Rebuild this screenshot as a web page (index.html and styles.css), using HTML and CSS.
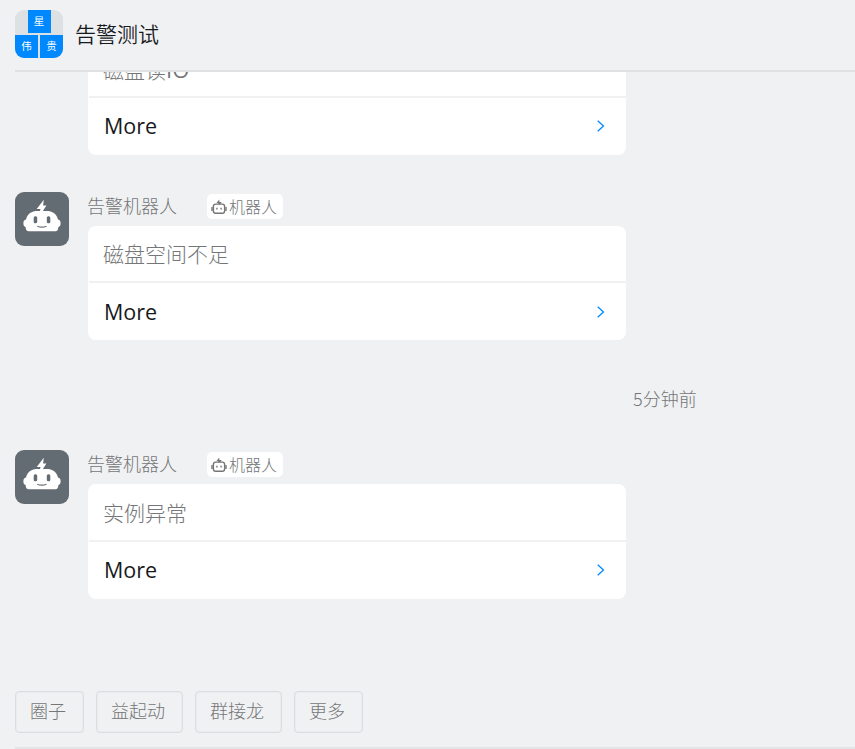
FILE: index.html
```html
<!DOCTYPE html>
<html lang="zh-CN">
<head>
<meta charset="utf-8">
<title>告警测试</title>
<link rel="stylesheet" href="styles.css">
</head>
<body>
<svg class="defs" aria-hidden="true">
  <symbol id="robot" viewBox="0 0 54 54">
    <path fill="#fff" d="M28.800 7.800 21.700 17h3.800L25 19h-2.500C16.600 19 12.400 21.600 11 27.600 9.100 27.900 8.400 29.200 8.400 31.200c0 2 .6 3.400 2.200 3.800.2 2.800 1 4.200 3.100 4.200h26.600c2.100 0 2.900-1.400 3.100-4.200 1.600-.4 2.200-1.800 2.200-3.800 0-2-.7-3.300-2.600-3.600C41.600 21.600 37.400 19 31.500 19h-3.600l3.500-5.400h-3.300z"/>
    <rect x="18.700" y="24.300" width="3.500" height="7" rx="1.500" fill="#646c73"/>
    <rect x="31.800" y="24.300" width="3.500" height="7" rx="1.500" fill="#646c73"/>
    <path d="M22.300 34.200q4.600 1.800 9.200 0" fill="none" stroke="#646c73" stroke-width="1.200"/>
  </symbol>
  <symbol id="bot" viewBox="0 0 16 16">
    <g fill="none" stroke="#737577" stroke-width="1.400">
      <rect x="2.400" y="5.100" width="11.200" height="9.200" rx="2.200"/>
      <path d="M1 8v4M15 8v4"/>
    </g>
    <path fill="#737577" d="M8.300.6 5.400 4h2v1.600h1.500l1.800-2.500H8.300zM5.200 8.800h1.400v1.700H5.200zM9.400 8.800h1.400v1.700H9.400z"/>
  </symbol>
  <symbol id="chevron" viewBox="0 0 8 12">
    <path d="M.7.700 6.500 6 .7 11.300" fill="none" stroke="#0089ff" stroke-width="1.300"/>
  </symbol>
</svg>
<header class="header">
  <div class="group-avatar">
    <span class="tile tile-top">星</span>
    <span class="tile">伟</span>
    <span class="tile">贵</span>
  </div>
  <h1 class="title">告警测试</h1>
</header>
<main class="chat">
  <article class="message message-first">
    <div class="body">
      <div class="card">
        <div class="subject">磁盘读<span class="latin">IO</span></div>
        <div class="more">More<svg class="chevron"><use href="#chevron"/></svg></div>
      </div>
    </div>
  </article>
  <article class="message">
    <div class="avatar"><svg><use href="#robot"/></svg></div>
    <div class="body">
      <div class="sender"><span class="name">告警机器人</span><span class="badge"><svg><use href="#bot"/></svg>机器人</span></div>
      <div class="card">
        <div class="subject">磁盘空间不足</div>
        <div class="more">More<svg class="chevron"><use href="#chevron"/></svg></div>
      </div>
    </div>
  </article>
  <div class="time">5分钟前</div>
  <article class="message message-last">
    <div class="avatar"><svg><use href="#robot"/></svg></div>
    <div class="body">
      <div class="sender"><span class="name">告警机器人</span><span class="badge"><svg><use href="#bot"/></svg>机器人</span></div>
      <div class="card">
        <div class="subject">实例异常</div>
        <div class="more">More<svg class="chevron"><use href="#chevron"/></svg></div>
      </div>
    </div>
  </article>
</main>
<footer class="shortcuts">
  <button>圈子</button>
  <button>益起动</button>
  <button>群接龙</button>
  <button>更多</button>
</footer>
</body>
</html>
```

FILE: styles.css
```css
* { box-sizing: border-box; }

body {
  margin: 0;
  height: 749px;
  padding-left: 15px;
  display: flex;
  flex-direction: column;
  overflow: hidden;
  background: #f0f1f3;
  color: #171a1d;
  font-family: "Noto Sans CJK SC", sans-serif;
  font-weight: 300;
}

.defs { position: absolute; width: 0; height: 0; }

svg { display: block; flex: none; }

.header {
  flex: none;
  height: 72px;
  padding: 10px 0 12px;
  display: flex;
  gap: 12px;
  border-bottom: 2px solid #e0e1e3;
}

.group-avatar {
  width: 48px;
  height: 48px;
  display: grid;
  grid-template-columns: 23px 23px;
  grid-template-rows: 23px 23px;
  gap: 2px;
  border-radius: 9px;
  overflow: hidden;
  background: #dde1e4;
}

.tile {
  display: flex;
  align-items: center;
  justify-content: center;
  background: #0089ff;
  color: #fff;
  font-size: 10.5px;
  line-height: 1;
  font-weight: 400;
}

.tile-top {
  grid-column: 1 / 3;
  justify-self: center;
  width: 23px;
}

.title {
  margin: 0;
  font-size: 21px;
  line-height: 47px;
  font-weight: 350;
}

.chat {
  flex: none;
  height: 608px;
  padding-bottom: 81px;
  display: flex;
  flex-direction: column;
  justify-content: flex-end;
  overflow: hidden;
}

.message { flex: none; display: flex; gap: 19px; }
.message-first { padding-left: 73px; margin-bottom: 37px; }

.avatar {
  width: 54px;
  height: 54px;
  border-radius: 9px;
  background: #646c73;
}
.avatar svg { width: 54px; height: 54px; }

.sender {
  height: 34px;
  display: flex;
  align-items: flex-start;
  gap: 30px;
}

.name {
  margin-left: -1px;
  font-size: 18px;
  line-height: 27px;
  color: #747677;
}

.badge {
  height: 25px;
  margin-top: 2px;
  padding: 0 6px 0 4px;
  display: flex;
  align-items: center;
  gap: 2px;
  border-radius: 5px;
  background: #fff;
  color: #747677;
  font-size: 16px;
  line-height: 25px;
}
.badge svg { width: 16px; height: 16px; }

.card {
  width: 538px;
  border-radius: 8px;
  background: #fff;
}

.subject {
  height: 57px;
  margin-left: 1px;
  padding-left: 14px;
  border-bottom: 2px solid #f1f1f2;
  font-size: 21px;
  line-height: 55px;
  color: #747677;
}
.message-first .subject { line-height: 57px; }
.message-last .subject { height: 58px; line-height: 57px; }

.latin {
  font-family: "Open Sans", "Noto Sans", sans-serif;
  font-size: 22px;
  font-weight: 400;
}

.more {
  height: 57px;
  padding: 0 21px 0 16px;
  display: flex;
  align-items: center;
  justify-content: space-between;
  font-family: "Open Sans", "Noto Sans", sans-serif;
  font-weight: 400;
  font-size: 21.5px;
  line-height: 57px;
}
.message-first .more,
.message-last .more { padding-bottom: 2px; }

.chevron { width: 8px; height: 12px; }

.time {
  flex: none;
  margin: 45px 0 38px 618px;
  font-size: 18px;
  line-height: 27px;
  color: #747677;
}

.shortcuts {
  flex: none;
  height: 69px;
  padding-top: 11px;
  display: flex;
  align-items: flex-start;
  gap: 12px;
  border-bottom: 2px solid #e3e4e6;
}

.shortcuts button {
  height: 42px;
  padding: 0 17px 3px 14px;
  border: 1px solid #dbdde0;
  border-radius: 4px;
  background: transparent;
  box-shadow: inset 0 0 0 1px #eaebed;
  color: #747677;
  font: 300 18px/37px "Noto Sans CJK SC", sans-serif;
}
```
